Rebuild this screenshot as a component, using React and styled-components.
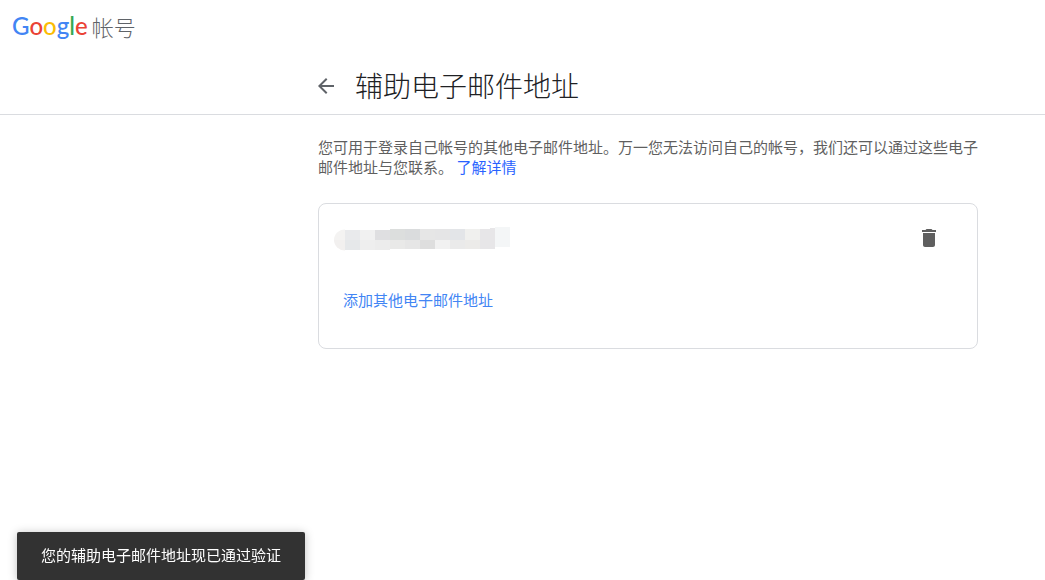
import React from "react";
import styled, { createGlobalStyle } from "styled-components";

const GlobalStyle = createGlobalStyle`
  *, *::before, *::after { box-sizing: border-box; }
  body {
    margin: 0;
    background: #fff;
    color: #5f5f5f;
    font-family: "Noto Sans CJK SC", sans-serif;
    font-size: 15px;
    font-weight: 400;
    line-height: 20px;
  }
`;

const Header = styled.header`
  display: flex;
  align-items: center;
  height: 58px;
  padding: 0 12px 6px;
`;

const Brand = styled.a`
  display: flex;
  align-items: center;
  gap: 4px;
  color: #5f6368;
  font-size: 22px;
  font-weight: 300;
  line-height: 28px;
  text-decoration: none;
`;

const Wordmark = styled.span`
  font-family: Lato, sans-serif;
  font-size: 24px;
  font-weight: 500;
`;

const Letter = styled.span`
  color: ${(p) => p.$color};
`;

const TitleBar = styled.div`
  display: flex;
  align-items: center;
  gap: 17px;
  height: 57px;
  padding: 0 67px 0 314px;
  border-bottom: 1px solid #dadce0;
`;

const IconButton = styled.button`
  display: flex;
  padding: 0;
  border: 0;
  background: none;
  color: ${(p) => p.$color};
  cursor: pointer;
`;

const Title = styled.h1`
  margin: 0;
  padding-bottom: 2px;
  color: #202124;
  font-size: 28px;
  font-weight: 300;
  line-height: 36px;
`;

const Content = styled.main`
  max-width: 1045px;
  padding: 22px 67px 80px 318px;
`;

const Description = styled.p`
  margin: 0 0 26px;
`;

const InlineLink = styled.a`
  color: #2962ff;
  text-decoration: none;
`;

const Card = styled.section`
  padding-bottom: 20px;
  border: 1px solid #dadce0;
  border-radius: 8px;
`;

const EmailRow = styled.div`
  display: flex;
  align-items: center;
  justify-content: space-between;
  height: 68px;
  padding: 0 36px 0 15px;
`;

const AddRow = styled.div`
  display: flex;
  align-items: center;
  height: 56px;
  padding: 0 24px;
`;

const AddLink = styled.a`
  color: #4285f4;
  text-decoration: none;
`;

const Snackbar = styled.div`
  position: fixed;
  bottom: 0;
  left: 17px;
  padding: 13px 24px 15px;
  border-radius: 2px;
  background: #323232;
  color: #fff;
  box-shadow: 0 1px 10px rgba(0, 0, 0, 0.25);
`;

const letters = [
  ["G", "#4285f4"],
  ["o", "#ea4335"],
  ["o", "#fbbc05"],
  ["g", "#4285f4"],
  ["l", "#34a853"],
  ["e", "#ea4335"],
];

const upperTiles = ["#e9eaec", "#f1f1f1", "#dfdfe1", "#dcdedd", "#dadcdd", "#e6e6e6", "#e5e5e6", "#e3e5e8", "#f0f0ee", "#e7e6e8"];
const lowerTiles = ["#e6e8ea", "#eeeeee", "#ececec", "#e9e9e8", "#e6e6e6", "#dedede", "#f1f1f1", "#eaeaea", "#ecebe9", "#e7e6e8"];

function Icon({ path }) {
  return (
    <svg width="24" height="24" viewBox="0 0 24 24" fill="currentColor" aria-hidden="true">
      <path d={path} />
    </svg>
  );
}

function RedactedAddress() {
  return (
    <svg width="176" height="26" viewBox="0 -2 176 26" role="img" aria-label="••••••">
      <path d="M11 2.500A11 10.500 0 0 0 0 13H11z" fill="#f4f3f2" />
      <path d="M0 13A11 10.500 0 0 0 11 23.500V13z" fill="#f2f0ef" />
      {upperTiles.map((fill, i) => {
        const y = i < 3 ? 3 : 2;
        return <rect key={i} x={11 + i * 15} y={y} width="15" height={13 - y} fill={fill} />;
      })}
      {lowerTiles.map((fill, i) => (
        <rect key={i} x={11 + i * 15} y="13" width="15" height={i < 3 ? 10 : 9} fill={fill} />
      ))}
      <rect x="156" y="1" width="5" height="20" fill="#e7e6e8" />
      <rect x="161" y="0" width="15" height="20" fill="#f4f6f7" />
    </svg>
  );
}

export default function App() {
  return (
    <>
      <GlobalStyle />
      <Header>
        <Brand href="#">
          <Wordmark>
            {letters.map(([letter, color], i) => (
              <Letter key={i} $color={color}>{letter}</Letter>
            ))}
          </Wordmark>
          <span>帐号</span>
        </Brand>
      </Header>
      <TitleBar>
        <IconButton type="button" aria-label="返回" $color="#5f6368">
          <Icon path="M20 11H7.830l5.590-5.590L12 4l-8 8 8 8 1.410-1.410L7.830 13H20v-2z" />
        </IconButton>
        <Title>辅助电子邮件地址</Title>
      </TitleBar>
      <Content>
        <Description>
          您可用于登录自己帐号的其他电子邮件地址。万一您无法访问自己的帐号，我们还可以通过这些电子邮件地址与您联系。{" "}
          <InlineLink href="#">了解详情</InlineLink>
        </Description>
        <Card>
          <EmailRow>
            <RedactedAddress />
            <IconButton type="button" aria-label="删除" $color="#5f5f5f">
              <Icon path="M6 19c0 1.100.9 2 2 2h8c1.100 0 2-.9 2-2V7H6v12zM19 4h-3.500l-1-1h-5l-1 1H5v2h14V4z" />
            </IconButton>
          </EmailRow>
          <AddRow>
            <AddLink href="#">添加其他电子邮件地址</AddLink>
          </AddRow>
        </Card>
      </Content>
      <Snackbar role="status">您的辅助电子邮件地址现已通过验证</Snackbar>
    </>
  );
}
